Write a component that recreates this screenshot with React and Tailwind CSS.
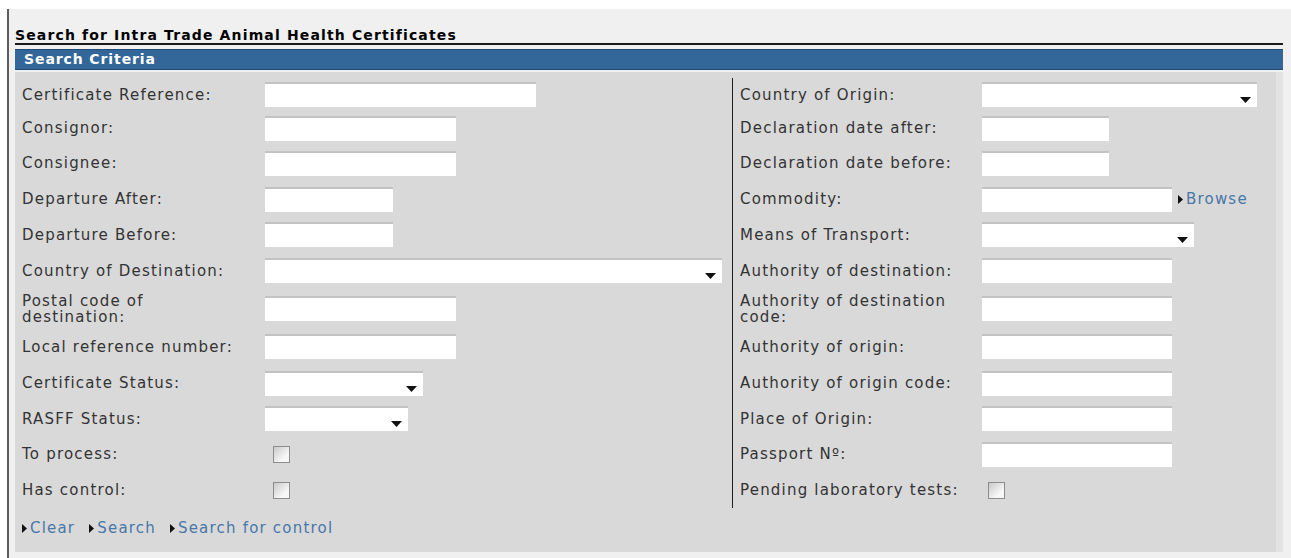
import React from "react";

function Arrow() {
  return (
    <svg width="5" height="9" viewBox="0 0 5 9" className="shrink-0 mr-[3px]">
      <polygon points="0,0 5,4.5 0,9" fill="#111" />
    </svg>
  );
}

function LinkItem({ children }) {
  return (
    <span className="flex items-center text-[#4877a8]">
      <Arrow />
      <span>{children}</span>
    </span>
  );
}

function TextBox({ w }) {
  return <div className={`${w} h-[25px] bg-white border-t-2 border-[#c3c3c3] shrink-0`} />;
}

function SelectBox({ w }) {
  return (
    <div className={`${w} h-[25px] bg-white border-t-2 border-[#c3c3c3] relative shrink-0`}>
      <svg width="11" height="6" viewBox="0 0 11 6" className="absolute right-[6px] bottom-[4px]">
        <polygon points="0,0 11,0 5.5,6" fill="#111" />
      </svg>
    </div>
  );
}

function Check({ ml }) {
  return (
    <div
      className={`${ml} w-[17px] h-[17px] border border-[#8d8d8d] bg-[linear-gradient(135deg,#c9c9c9,#f7f7f7_70%)] shrink-0`}
    />
  );
}

function Label({ children }) {
  return <div className="pl-[7px] text-[#333] leading-[16px] shrink-0">{children}</div>;
}

const rows = [
  {
    h: "h-[33px]",
    l: "Certificate Reference:",
    lc: <TextBox w="w-[271px]" />,
    r: "Country of Origin:",
    rc: <SelectBox w="w-[275px]" />,
  },
  {
    h: "h-[34px]",
    l: "Consignor:",
    lc: <TextBox w="w-[191px]" />,
    r: "Declaration date after:",
    rc: <TextBox w="w-[127px]" />,
  },
  {
    h: "h-[36px]",
    l: "Consignee:",
    lc: <TextBox w="w-[191px]" />,
    r: "Declaration date before:",
    rc: <TextBox w="w-[127px]" />,
  },
  {
    h: "h-[36px]",
    l: "Departure After:",
    lc: <TextBox w="w-[128px]" />,
    r: "Commodity:",
    rc: (
      <>
        <TextBox w="w-[190px]" />
        <span className="ml-[6px]">
          <LinkItem>Browse</LinkItem>
        </span>
      </>
    ),
  },
  {
    h: "h-[35px]",
    l: "Departure Before:",
    lc: <TextBox w="w-[128px]" />,
    r: "Means of Transport:",
    rc: <SelectBox w="w-[212px]" />,
  },
  {
    h: "h-[37px]",
    l: "Country of Destination:",
    lc: <SelectBox w="w-[457px]" />,
    r: "Authority of destination:",
    rc: <TextBox w="w-[190px]" />,
  },
  {
    h: "h-[39px]",
    l: (
      <>
        Postal code of
        <br />
        destination:
      </>
    ),
    lc: <TextBox w="w-[191px]" />,
    r: (
      <>
        Authority of destination
        <br />
        code:
      </>
    ),
    rc: <TextBox w="w-[190px]" />,
  },
  {
    h: "h-[37px]",
    l: "Local reference number:",
    lc: <TextBox w="w-[191px]" />,
    r: "Authority of origin:",
    rc: <TextBox w="w-[190px]" />,
  },
  {
    h: "h-[36px]",
    l: "Certificate Status:",
    lc: <SelectBox w="w-[158px]" />,
    r: "Authority of origin code:",
    rc: <TextBox w="w-[190px]" />,
  },
  {
    h: "h-[35px]",
    l: "RASFF Status:",
    lc: <SelectBox w="w-[143px]" />,
    r: "Place of Origin:",
    rc: <TextBox w="w-[190px]" />,
  },
  {
    h: "h-[36px]",
    l: "To process:",
    lc: <Check ml="ml-[8px]" />,
    r: "Passport Nº:",
    rc: <TextBox w="w-[190px]" />,
  },
  {
    h: "h-[36px]",
    l: "Has control:",
    lc: <Check ml="ml-[8px]" />,
    r: "Pending laboratory tests:",
    rc: <Check ml="ml-[6px]" />,
  },
];

export default function App() {
  return (
    <div className="w-[1291px] h-[558px] overflow-hidden bg-white pt-[9px] pl-[7px] font-['DejaVu_Sans',Verdana,sans-serif] text-[15px] tracking-[1.2px]">
      <div className="h-full border-l-2 border-[#5c5c5c] bg-[#f0f0f0] pl-[6px] pr-[8px]">
        <div className="pt-[18px] border-b-2 border-[#1a1a1a] text-black text-[14px] font-bold leading-[16px] tracking-[1.14px]">
          Search for Intra Trade Animal Health Certificates
        </div>
        <div className="mt-[4px] h-[21px] bg-[#336699] border-y border-[#1f4d78] pl-[9px] text-white text-[14px] font-bold leading-[19px] tracking-[0.9px]">
          Search Criteria
        </div>
        <div className="mt-[2px] bg-[#d9d9d9] border-r-[7px] border-[#e3e3e3] pt-[6px] pb-[4px]">
          {rows.map((row, i) => (
            <div key={i} className={`flex ${row.h}`}>
              <div className="w-[717px] flex items-center">
                <div className="w-[250px]">
                  <Label>{row.l}</Label>
                </div>
                {row.lc}
              </div>
              <div className="flex-1 flex items-center border-l border-[#1e1e1e]">
                <div className="w-[249px]">
                  <Label>{row.r}</Label>
                </div>
                {row.rc}
              </div>
            </div>
          ))}
          <div className="h-[40px] flex items-center pl-[7px] gap-[14px]">
            <LinkItem>Clear</LinkItem>
            <LinkItem>Search</LinkItem>
            <LinkItem>Search for control</LinkItem>
          </div>
        </div>
      </div>
    </div>
  );
}
